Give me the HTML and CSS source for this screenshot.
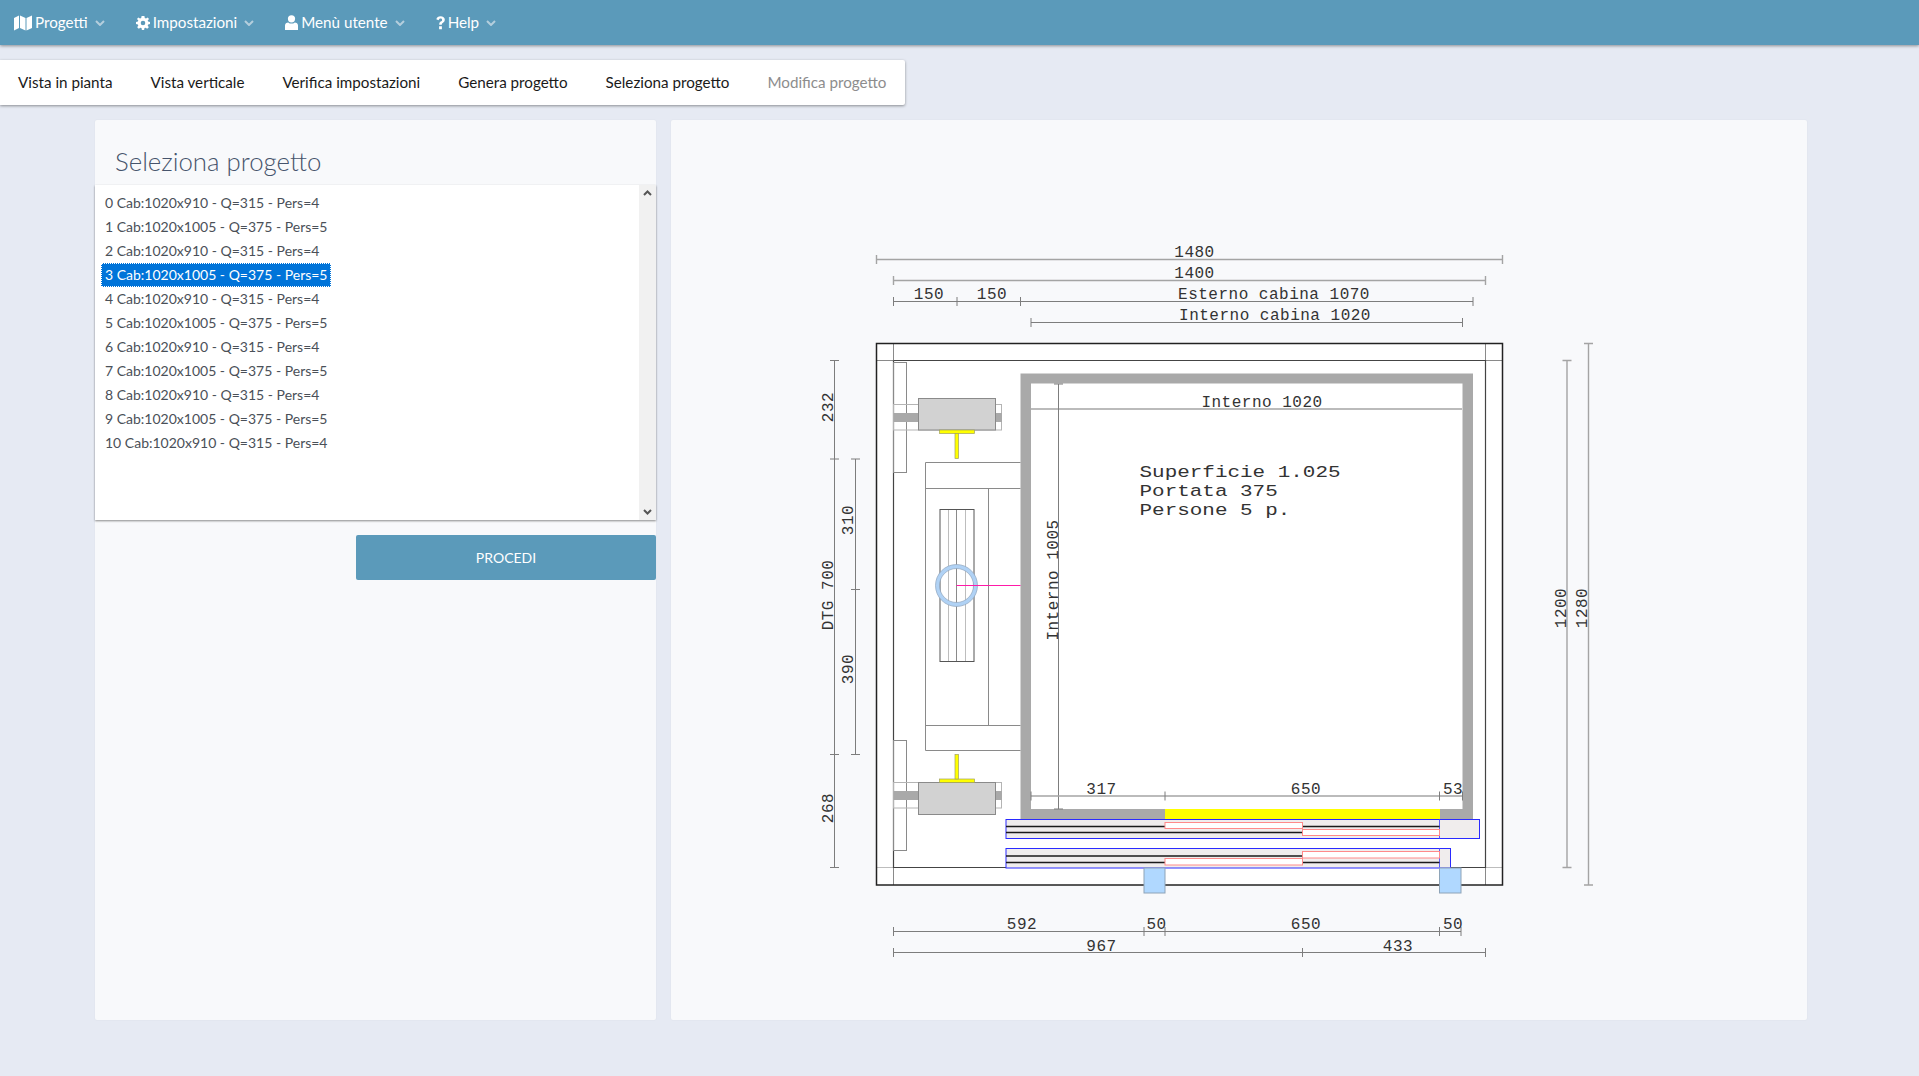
FILE: index.html
```html
<!DOCTYPE html>
<html lang="en">
<head>
    <meta charset="UTF-8">
    <meta name="viewport" content="width=device-width, initial-scale=1.0">
    <title>Seleziona progetto</title>
    <link rel="stylesheet" href="styles.css">
</head>
<body>

    <nav class="top-bar">
        <a class="top-item">
            <svg class="top-icon" width="18" height="16" viewBox="0 0 18 16"><path d="M0 3 L5 0.5 V13 L0 15.5 Z M6 0.5 L11.5 3 V15.5 L6 13 Z M12.5 3 L18 0.5 V13 L12.5 15.5 Z"/></svg>
            <span>Progetti</span>
            <svg class="chev" width="10" height="6" viewBox="0 0 10 6"><path d="M1 1 L5 5 L9 1"/></svg>
        </a>
        <a class="top-item">
            <svg class="top-icon" width="14" height="14" viewBox="0 0 14 14"><path fill-rule="evenodd" d="M5.6 0 H8.4 L8.8 1.9 L10 2.4 L11.7 1.4 L13 3 L11.7 4.4 L12.1 5.6 L14 6 V8.1 L12.1 8.5 L11.7 9.6 L12.8 11.2 L11.2 12.8 L9.6 11.7 L8.5 12.1 L8.1 14 H5.9 L5.5 12.1 L4.4 11.7 L2.8 12.8 L1.2 11.2 L2.3 9.6 L1.9 8.5 L0 8.1 V6 L1.9 5.6 L2.3 4.4 L1 3 L2.3 1.4 L4 2.4 L5.2 1.9 Z M7 4.7 A2.3 2.3 0 1 0 7 9.3 A2.3 2.3 0 1 0 7 4.7 Z"/></svg>
            <span>Impostazioni</span>
            <svg class="chev" width="10" height="6" viewBox="0 0 10 6"><path d="M1 1 L5 5 L9 1"/></svg>
        </a>
        <a class="top-item">
            <svg class="top-icon" width="13" height="15" viewBox="0 0 13 15"><circle cx="6.5" cy="3.8" r="3.6"/><path d="M0 15 V10.5 C0 8.6 1.5 7.4 3.2 7.4 C4.2 8.2 5.3 8.6 6.5 8.6 C7.7 8.6 8.8 8.2 9.8 7.4 C11.5 7.4 13 8.6 13 10.5 V15 Z"/></svg>
            <span>Menù utente</span>
            <svg class="chev" width="10" height="6" viewBox="0 0 10 6"><path d="M1 1 L5 5 L9 1"/></svg>
        </a>
        <a class="top-item">
            <svg class="top-icon" width="9" height="14" viewBox="0 0 9 14"><path d="M0.3 3.2 C0.8 1.2 2.4 0.2 4.5 0.2 C7 0.2 8.8 1.6 8.8 3.8 C8.8 5.4 7.8 6.2 6.8 6.9 C6 7.4 5.8 7.8 5.8 8.8 H3.2 C3.2 7.2 3.6 6.3 4.7 5.6 C5.6 5 6.1 4.6 6.1 3.9 C6.1 3.1 5.4 2.6 4.5 2.6 C3.6 2.6 3 3.2 2.6 4.2 Z M3.1 10.2 H5.9 V13.2 H3.1 Z"/></svg>
            <span>Help</span>
            <svg class="chev" width="10" height="6" viewBox="0 0 10 6"><path d="M1 1 L5 5 L9 1"/></svg>
        </a>
    </nav>

    <div class="tab-bar">
        <a class="tab">Vista in pianta</a>
        <a class="tab">Vista verticale</a>
        <a class="tab">Verifica impostazioni</a>
        <a class="tab">Genera progetto</a>
        <a class="tab">Seleziona progetto</a>
        <a class="tab tab-off">Modifica progetto</a>
    </div>

    <main class="content">
        <section class="panel side-panel">
            <h2 class="panel-title">Seleziona progetto</h2>
            <div class="list-box">
                <ul class="project-list">
                    <li>0 Cab:1020x910 - Q=315 - Pers=4</li>
                    <li>1 Cab:1020x1005 - Q=375 - Pers=5</li>
                    <li>2 Cab:1020x910 - Q=315 - Pers=4</li>
                    <li class="selected">3 Cab:1020x1005 - Q=375 - Pers=5</li>
                    <li>4 Cab:1020x910 - Q=315 - Pers=4</li>
                    <li>5 Cab:1020x1005 - Q=375 - Pers=5</li>
                    <li>6 Cab:1020x910 - Q=315 - Pers=4</li>
                    <li>7 Cab:1020x1005 - Q=375 - Pers=5</li>
                    <li>8 Cab:1020x910 - Q=315 - Pers=4</li>
                    <li>9 Cab:1020x1005 - Q=375 - Pers=5</li>
                    <li>10 Cab:1020x910 - Q=315 - Pers=4</li>
                </ul>
                <div class="scroll-track">
                    <svg width="9" height="6" viewBox="0 0 9 6"><path d="M1 5 L4.5 1.5 L8 5"/></svg>
                    <svg width="9" height="6" viewBox="0 0 9 6"><path d="M1 1 L4.5 4.5 L8 1"/></svg>
                </div>
            </div>
            <button class="go-btn">PROCEDI</button>
        </section>

        <section class="panel drawing-panel">
            <svg class="drawing" width="1136" height="900" viewBox="671 120 1136 900">
                <!-- quote in alto -->
                <path class="dim-light" d="M876.5 259.5 H1502.5 M876.5 255 V264 M1502.5 255 V264"/>
                <path class="dim-light" d="M893.5 280.5 H1485.5 M893.5 276 V285 M1485.5 276 V285"/>
                <path class="dim" d="M893.5 301.5 H1473 M893.5 297 V306 M957 297 V306 M1020.5 297 V306 M1473 297 V306"/>
                <path class="dim" d="M1031 322.5 H1462.5 M1031 318 V327 M1462.5 318 V327"/>
                <text class="lbl" x="1194.5" y="257" text-anchor="middle">1480</text>
                <text class="lbl" x="1194.5" y="278" text-anchor="middle">1400</text>
                <text class="lbl" x="929" y="299" text-anchor="middle">150</text>
                <text class="lbl" x="992" y="299" text-anchor="middle">150</text>
                <text class="lbl" x="1274" y="299" text-anchor="middle">Esterno cabina 1070</text>
                <text class="lbl" x="1275" y="320" text-anchor="middle">Interno cabina 1020</text>

                <!-- vano -->
                <rect class="shaft-fill" x="876.5" y="343.5" width="626" height="541.5"/>
                <rect class="wall" x="1020.5" y="373.5" width="452.5" height="445.5"/>
                <rect class="yellow-plain" x="1165" y="809" width="275" height="10"/>
                <rect class="shaft-fill" x="1031" y="383.5" width="431.5" height="425.5"/>
                <path class="line-thin" d="M893.5 343.5 V360.5 M876.5 360.5 H893.5 M1485.5 343.5 V360.5 M1485.5 360.5 H1502.5 M893.5 867.5 V885 M1485.5 867.5 V885"/>
                <path class="line-light" d="M876.5 867.5 H893.5 M1485.5 867.5 H1502.5"/>
                <path class="line-strong" d="M893.5 360.5 H1485.5 V867.5 H1450 M1006 867.5 H893.5 V360.5"/>
                <rect class="outline" x="876.5" y="343.5" width="626" height="541.5"/>

                <!-- contrappeso e guide, sopra -->
                <rect class="line-thin" x="893.5" y="362.5" width="13" height="110"/>
                <rect class="guide" x="893.5" y="404.5" width="108" height="25.5"/>
                <rect class="wall" x="893.5" y="413" width="25" height="9"/>
                <rect class="wall" x="995" y="413" width="7" height="9"/>
                <rect class="motor" x="918.5" y="398.5" width="77" height="31.5"/>
                <rect class="yellow" x="939.5" y="430" width="35" height="3.5"/>
                <rect class="yellow" x="955" y="433.5" width="3.5" height="25"/>

                <!-- contrappeso e guide, sotto -->
                <rect class="line-thin" x="893.5" y="740.5" width="13" height="110"/>
                <rect class="guide" x="893.5" y="782.5" width="108" height="25.5"/>
                <rect class="wall" x="893.5" y="791" width="25" height="9"/>
                <rect class="wall" x="995" y="791" width="7" height="9"/>
                <rect class="motor" x="918.5" y="782.5" width="77" height="32"/>
                <rect class="yellow" x="939.5" y="779" width="35" height="3.5"/>
                <rect class="yellow" x="955" y="754.5" width="3.5" height="24.5"/>

                <!-- arcata -->
                <path class="line-thin" d="M1020.5 462.5 H925.5 V750.5 H1020.5 M925.5 488.5 H1020.5 M925.5 725.5 H1020.5 M988.5 488.5 V725.5"/>
                <path class="line-light" d="M948.5 509.5 V661.5 M965.5 509.5 V661.5"/>
                <path class="line-thin" d="M956.5 509.5 V661.5"/>
                <rect class="line-mid" x="940" y="509.5" width="34" height="152"/>
                <circle class="ring" cx="956.5" cy="585.5" r="19"/>
                <circle class="ring-edge" cx="956.5" cy="585.5" r="21"/>
                <circle class="ring-edge" cx="956.5" cy="585.5" r="17"/>
                <path class="magenta" d="M956.5 585.5 H1020.5"/>

                <!-- quote interne -->
                <path class="dim-light" d="M1031 409 H1462"/>
                <path class="dim" d="M1058.5 384 V809 M1054 384 H1063 M1054 809 H1063"/>
                <path class="dim-light" d="M1031 796 H1462.5"/>
                <path class="dim" d="M1031 791.5 V800.5 M1165 791.5 V800.5 M1439.5 791.5 V800.5 M1462.5 791.5 V800.5"/>
                <text class="lbl" x="1262" y="407" text-anchor="middle">Interno 1020</text>
                <text class="lbl" x="1101.5" y="794" text-anchor="middle">317</text>
                <text class="lbl" x="1306" y="794" text-anchor="middle">650</text>
                <text class="lbl" x="1453" y="794" text-anchor="middle">53</text>
                <text class="lbl" transform="translate(1057.5 580) rotate(-90)" text-anchor="middle">Interno 1005</text>
                <text class="lbl-big" transform="translate(1139.5 477) scale(1.254 1)">Superficie 1.025</text>
                <text class="lbl-big" transform="translate(1139.5 496) scale(1.254 1)">Portata 375</text>
                <text class="lbl-big" transform="translate(1139.5 515) scale(1.254 1)">Persone 5 p.</text>

                <!-- porte -->
                <rect class="door" x="1006" y="819.5" width="473.5" height="19"/>
                <rect class="door" x="1006" y="848.5" width="444.5" height="19.5"/>
                <path class="door-edge" d="M1439.5 819.5 V838.5 M1439.5 848.5 V868"/>
                <path class="rail" d="M1006 826.5 H1165 M1302.5 826.5 H1439.5 M1006 832.5 H1302.5 M1006 856 H1302.5 M1006 862.5 H1165 M1302.5 862.5 H1439.5"/>
                <rect class="panel-pink" x="1165" y="822.5" width="137.5" height="6"/>
                <rect class="panel-pink" x="1302.5" y="829.5" width="137" height="6"/>
                <rect class="panel-pink" x="1165" y="858.5" width="137.5" height="6.5"/>
                <rect class="panel-pink" x="1302.5" y="851.5" width="137" height="6.5"/>
                <rect class="jamb" x="1144" y="868" width="21" height="25"/>
                <rect class="jamb" x="1439.5" y="868" width="21.5" height="25"/>

                <!-- quote a sinistra -->
                <path class="dim" d="M834.5 360.5 V867.5 M830 360.5 H839 M830 459 H839 M830 754.5 H839 M830 867.5 H839"/>
                <path class="dim" d="M855.5 459 V754.5 M851 459 H860 M851 589.5 H860 M851 754.5 H860"/>
                <text class="lbl" transform="translate(833 407) rotate(-90)" text-anchor="middle">232</text>
                <text class="lbl" transform="translate(833 595) rotate(-90)" text-anchor="middle">DTG 700</text>
                <text class="lbl" transform="translate(833 808) rotate(-90)" text-anchor="middle">268</text>
                <text class="lbl" transform="translate(853 520) rotate(-90)" text-anchor="middle">310</text>
                <text class="lbl" transform="translate(853 669) rotate(-90)" text-anchor="middle">390</text>

                <!-- quote a destra -->
                <path class="dim-light" d="M1567 360.5 V867.5 M1562.5 360.5 H1571.5 M1562.5 867.5 H1571.5"/>
                <path class="dim-light" d="M1588.5 343.5 V885 M1584 343.5 H1593 M1584 885 H1593"/>
                <text class="lbl" transform="translate(1566 608) rotate(-90)" text-anchor="middle">1200</text>
                <text class="lbl" transform="translate(1587 608) rotate(-90)" text-anchor="middle">1280</text>

                <!-- quote in basso -->
                <path class="dim" d="M893.5 931.5 H1461 M893.5 927 V936 M1144 927 V936 M1165 927 V936 M1439.5 927 V936 M1461 927 V936"/>
                <path class="dim" d="M893.5 952.5 H1485.5 M893.5 948 V957 M1302.5 948 V957 M1485.5 948 V957"/>
                <text class="lbl" x="1022" y="929" text-anchor="middle">592</text>
                <text class="lbl" x="1156.5" y="929" text-anchor="middle">50</text>
                <text class="lbl" x="1306" y="929" text-anchor="middle">650</text>
                <text class="lbl" x="1453" y="929" text-anchor="middle">50</text>
                <text class="lbl" x="1101.5" y="950.5" text-anchor="middle">967</text>
                <text class="lbl" x="1398" y="950.5" text-anchor="middle">433</text>
            </svg>
        </section>
    </main>

</body>
</html>
```

FILE: styles.css
```css
body {
    font-family: 'Lato', 'Liberation Sans', sans-serif;
    background: #e6eaf3;
    margin: 0;
    padding: 0;
    height: 1076px;
    overflow: hidden;
}

.top-bar {
    height: 45px;
    background: #5b9aba;
    box-shadow: 0 1px 3px rgba(0, 0, 0, 0.4);
    display: flex;
    align-items: center;
    padding-left: 14px;
    gap: 31px;
}

.top-item {
    display: flex;
    align-items: center;
    color: white;
    font-size: 15.2px;
}

.top-item span {
    padding-bottom: 1px;
}

.top-icon {
    fill: white;
    margin-right: 3px;
}

.chev {
    fill: none;
    stroke: #b4cedd;
    stroke-width: 2;
    margin-left: 7px;
}

.tab-bar {
    display: inline-flex;
    align-items: center;
    height: 45px;
    margin-top: 15px;
    background: white;
    box-shadow: 0 1px 3px rgba(0, 0, 0, 0.4);
    border-radius: 0 2px 2px 0;
}

.tab {
    padding: 0 19px 2px;
    font-size: 15.2px;
    color: #1a1a1a;
}

.tab:first-child {
    padding-left: 18px;
}

.tab-off {
    color: #8d8d8d;
}

.content {
    display: flex;
    gap: 15px;
    margin-top: 15px;
    padding-left: 95px;
}

.panel {
    background: #f8f9fb;
    height: 900px;
    border-radius: 2px;
    box-shadow: 0 0 2px rgba(0, 0, 0, 0.06);
}

.side-panel {
    width: 561px;
    display: flex;
    flex-direction: column;
}

.panel-title {
    height: 65px;
    box-sizing: border-box;
    margin: 0;
    padding: 23px 0 0 20px;
    font-size: 25.8px;
    line-height: 36px;
    font-weight: 300;
    color: #46546c;
}

.list-box {
    height: 335px;
    background: white;
    box-shadow: 0 1px 2px rgba(0, 0, 0, 0.45);
    display: flex;
    justify-content: space-between;
}

.project-list {
    list-style: none;
    margin: 0;
    padding: 6px 0 0 6px;
    font-size: 14px;
    color: #4a5058;
}

.project-list li {
    height: 24px;
    line-height: 24px;
    padding: 0 4px;
    box-sizing: border-box;
    white-space: nowrap;
}

.project-list .selected {
    width: 230px;
    background: #0074d9;
    color: white;
    outline: 1px dotted white;
    outline-offset: -1px;
}

.scroll-track {
    width: 17px;
    background: #f1f1f1;
    display: flex;
    flex-direction: column;
    justify-content: space-between;
    align-items: center;
    padding: 5px 0;
    box-sizing: border-box;
}

.scroll-track svg {
    fill: none;
    stroke: #555;
    stroke-width: 2;
}

.go-btn {
    align-self: flex-end;
    width: 300px;
    height: 45px;
    margin-top: 15px;
    background: #5b9aba;
    color: white;
    font-family: inherit;
    font-size: 14px;
    border: none;
    border-radius: 2px;
}

.drawing-panel {
    width: 1136px;
}

.drawing {
    display: block;
}

.lbl {
    font-family: 'Liberation Mono', monospace;
    font-size: 16px;
    letter-spacing: 0.5px;
    fill: #333;
}

.lbl-big {
    font-family: 'Liberation Mono', monospace;
    font-size: 16.7px;
    fill: #333;
}

.dim,
.dim-light,
.line-thin,
.line-mid,
.line-light,
.line-strong,
.outline,
.guide,
.rail,
.magenta,
.door-edge {
    fill: none;
}

.dim {
    stroke: #7d7d7d;
    stroke-width: 1;
}

.dim-light {
    stroke: #a4a4a4;
    stroke-width: 1.4;
}

.line-thin {
    stroke: #8a8a8a;
    stroke-width: 1;
}

.line-mid {
    stroke: #555;
    stroke-width: 1;
}

.line-light {
    stroke: #bdbdbd;
    stroke-width: 1;
}

.line-strong {
    stroke: #444;
    stroke-width: 1.2;
}

.outline {
    stroke: #222;
    stroke-width: 1.5;
}

.shaft-fill {
    fill: white;
}

.wall {
    fill: #a9a9a9;
}

.guide {
    stroke: #b4b4b4;
    stroke-width: 1;
}

.motor {
    fill: #d2d2d2;
    stroke: #8a8a8a;
    stroke-width: 1;
}

.yellow {
    fill: #ffff00;
    stroke: #a0a060;
    stroke-width: 0.7;
}

.yellow-plain {
    fill: #ffff00;
}

.ring {
    fill: none;
    stroke: #b0d2f5;
    stroke-width: 4;
}

.ring-edge {
    fill: none;
    stroke: #8fa5bd;
    stroke-width: 0.7;
}

.magenta {
    stroke: #ff1aa8;
    stroke-width: 1;
}

.door {
    fill: #f0eded;
    stroke: #2a2aff;
    stroke-width: 1;
}

.door-edge {
    stroke: #5a5aff;
    stroke-width: 1;
}

.rail {
    stroke: #1a1a1a;
    stroke-width: 1.5;
}

.panel-pink {
    fill: white;
    stroke: #ff8a8a;
    stroke-width: 1;
}

.jamb {
    fill: #b0d8ff;
    stroke: #8ea4b8;
    stroke-width: 1;
}
```
